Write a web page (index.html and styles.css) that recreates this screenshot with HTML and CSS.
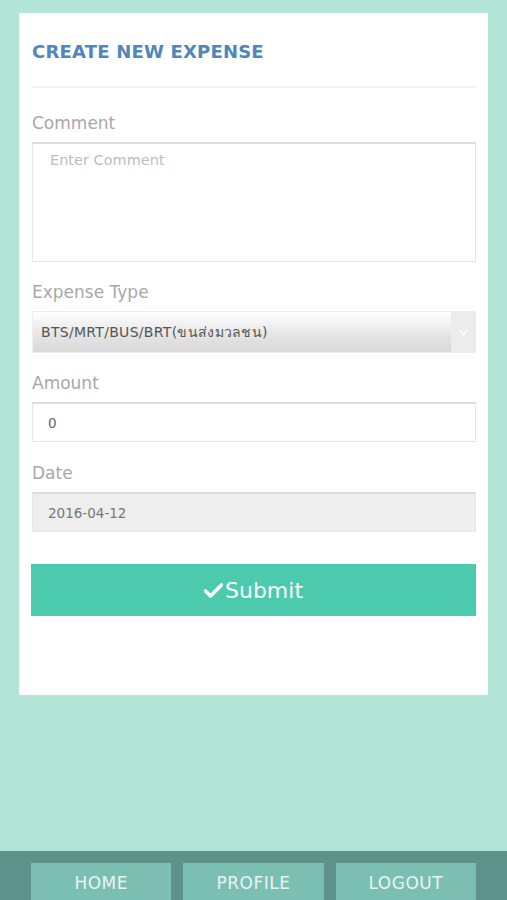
FILE: index.html
```html
<!DOCTYPE html>
<html>
<head>
<meta charset="utf-8">
<link rel="stylesheet" href="styles.css">
</head>
<body>
<div class="page">
  <div class="card">
    <h1 class="title">CREATE NEW EXPENSE</h1>
    <div class="divider"></div>
    <label class="label">Comment</label>
    <div class="textarea"><span class="placeholder">Enter Comment</span></div>
    <label class="label">Expense Type</label>
    <div class="select">
      <span class="select-text">BTS/MRT/BUS/BRT(ขนส่งมวลชน)</span>
      <span class="select-arrow"><svg width="9" height="7" viewBox="0 0 9 7"><path d="M1 1 L4.5 6 L8 1" fill="none" stroke="#fff" stroke-width="1.6"/></svg></span>
    </div>
    <label class="label">Amount</label>
    <div class="input">0</div>
    <label class="label">Date</label>
    <div class="input input-disabled">2016-04-12</div>
    <button class="submit"><svg class="check" width="19" height="15" viewBox="0 0 19 15"><path d="M1.5 8 L6.5 13 L17.5 2" fill="none" stroke="#fff" stroke-width="3.6" stroke-linecap="round" stroke-linejoin="round"/></svg>Submit</button>
  </div>
  <div class="footer">
    <a class="nav">HOME</a>
    <a class="nav">PROFILE</a>
    <a class="nav">LOGOUT</a>
  </div>
</div>
</body>
</html>
```
FILE: styles.css
```css
* { box-sizing: border-box; }
html, body { margin: 0; padding: 0; }
body {
  background: #b2e4d8;
  font-family: "DejaVu Sans", "Noto Sans", sans-serif;
}
.page {
  height: 900px;
  display: flex;
  flex-direction: column;
  overflow: hidden;
}
.card {
  background: #fff;
  margin: 13px 19px 0 19px;
  padding: 27px 12px 79px 13px;
  display: flex;
  flex-direction: column;
}
.title {
  margin: 0;
  font-size: 18px;
  line-height: 24px;
  font-weight: bold;
  color: #4e86bd;
  letter-spacing: 0.2px;
}
.divider {
  height: 2px;
  background: #f2f2f2;
  margin: 22px 0 24px 0;
}
.label {
  display: block;
  font-size: 17px;
  line-height: 22px;
  color: #a8a8a8;
  margin-bottom: 8px;
}
.textarea {
  height: 120px;
  border: 1px solid #e6e6e6;
  border-top: 2px solid #dcdcdc;
  padding: 6px 17px;
  margin-bottom: 19px;
}
.placeholder {
  font-size: 14.5px;
  line-height: 18px;
  color: #bdbdbd;
}
.select {
  height: 42px;
  display: flex;
  align-items: stretch;
  background: linear-gradient(#ffffff, #e4e4e4 60%, #d8d8d8);
  border: 1px solid #eeeeee;
  margin-bottom: 19px;
}
.select-text {
  flex: 1;
  display: flex;
  align-items: center;
  padding-left: 8px;
  font-size: 14px;
  letter-spacing: 0.3px;
  color: #555;
}
.select-arrow {
  width: 24px;
  background: #ececec;
  display: flex;
  align-items: center;
  justify-content: center;
}
.input {
  height: 40px;
  border: 1px solid #e6e6e6;
  border-top: 2px solid #dcdcdc;
  padding-left: 15px;
  display: flex;
  align-items: center;
  font-size: 13.5px;
  color: #666;
  margin-bottom: 20px;
}
.input-disabled {
  background: #eeeeee;
  color: #777;
  margin-bottom: 32px;
}
.submit {
  height: 52px;
  margin: 0 0 0 -1px;
  border: none;
  background: #4ccaad;
  color: #fff;
  font-family: inherit;
  font-size: 22px;
  display: flex;
  align-items: center;
  justify-content: center;
  padding: 0;
}
.check { margin-right: 2px; }
.footer {
  margin-top: auto;
  height: 49px;
  background: #5e9189;
  display: flex;
  gap: 12px;
  padding: 12px 31px 0 31px;
  overflow: hidden;
}
.nav {
  flex: 1;
  height: 45px;
  background: #7bbfb3;
  color: #e8f4f1;
  font-size: 17px;
  letter-spacing: 0.5px;
  display: flex;
  justify-content: center;
  padding-top: 10px;
}
```
